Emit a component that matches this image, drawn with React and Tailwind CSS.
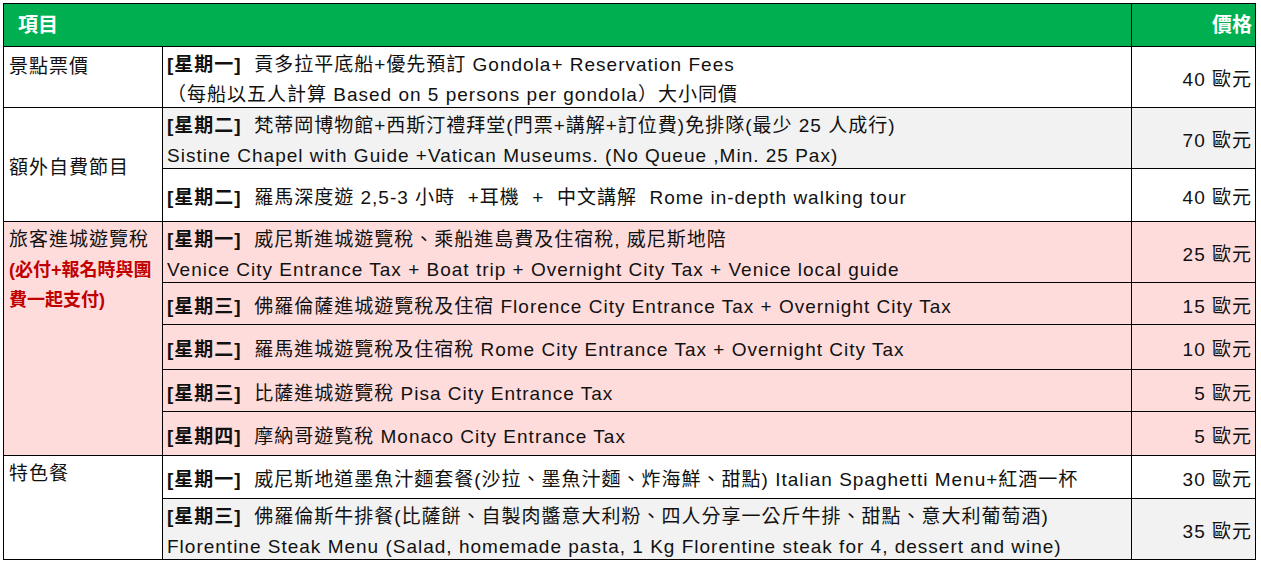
import React from "react";

const B = ({ children }) => <span className="font-bold">{children}</span>;

const cellL = "border border-black align-top pl-[5px] pt-[3px] leading-[30px]";
const cellM = "border border-black align-middle pl-[4px] leading-[30px] whitespace-pre-wrap";
const cellR = "border border-black align-middle text-right pr-[3px] leading-[30px]";

const Nudge = ({ children }) => <div className="pt-[3px] -mb-[3px]">{children}</div>;

function Row({ h, bg = "", text, price, children }) {
  return (
    <tr className={h + " " + bg}>
      {children}
      <td className={cellM}><Nudge>{text}</Nudge></td>
      <td className={cellR}><Nudge>{price}</Nudge></td>
    </tr>
  );
}

export default function App() {
  return (
    <div className="w-[1261px] h-[565px] bg-white pt-[3px] pl-[3px] text-[19px] text-[#111] tracking-[1px]" style={{ fontFamily: '"Liberation Sans", "Noto Sans CJK TC", sans-serif' }}>
      <table className="border-collapse table-fixed w-[1252px]">
        <colgroup>
          <col className="w-[159px]" />
          <col className="w-[969px]" />
          <col className="w-[124px]" />
        </colgroup>
        <tbody>
          <tr className="h-[43px] bg-[#00b050] text-white font-bold">
            <td className="border border-black border-r-0 pl-[14px] align-middle text-[20px] tracking-[0px]" colSpan={2}>項目</td>
            <td className="border border-black text-right pr-[3px] align-middle text-[20px] tracking-[0px]">價格</td>
          </tr>
          <Row
            h="h-[61px]"
            text={<><B>[星期一]</B>  貢多拉平底船+優先預訂 Gondola+ Reservation Fees<br />（每船以五人計算 Based on 5 persons per gondola）大小同價</>}
            price="40 歐元"
          >
            <td className={cellL + " pt-[5px]"}>景點票價</td>
          </Row>
          <Row
            h="h-[61px]"
            bg="bg-[#f2f2f2]"
            text={<><B>[星期二]</B>  梵蒂岡博物館+西斯汀禮拜堂(門票+講解+訂位費)免排隊(最少 25 人成行)<br />Sistine Chapel with Guide +Vatican Museums. (No Queue ,Min. 25 Pax)</>}
            price="70 歐元"
          >
            <td className="border border-black align-middle pl-[5px] leading-[30px] bg-white" rowSpan={2}><Nudge>額外自費節目</Nudge></td>
          </Row>
          <Row
            h="h-[53px]"
            text={<><B>[星期二]</B>  羅馬深度遊 2,5-3 小時  +耳機  +  中文講解  Rome in-depth walking tour</>}
            price="40 歐元"
          />
          <Row
            h="h-[59px]"
            bg="bg-[#ffdcdc]"
            text={<><B>[星期一]</B>  威尼斯進城遊覽稅、乘船進島費及住宿稅, 威尼斯地陪<br />Venice City Entrance Tax + Boat trip + Overnight City Tax + Venice local guide</>}
            price="25 歐元"
          >
            <td className={cellL} rowSpan={5}>
              旅客進城遊覽稅<br />
              <span className="font-bold text-[#c00000] text-[18px] tracking-[0px]">(必付+報名時與團<br />費一起支付)</span>
            </td>
          </Row>
          <Row
            h="h-[42px]"
            bg="bg-[#ffdcdc]"
            text={<><B>[星期三]</B>  佛羅倫薩進城遊覽稅及住宿 Florence City Entrance Tax + Overnight City Tax</>}
            price="15 歐元"
          />
          <Row
            h="h-[45px]"
            bg="bg-[#ffdcdc]"
            text={<><B>[星期二]</B>  羅馬進城遊覽稅及住宿稅 Rome City Entrance Tax + Overnight City Tax</>}
            price="10 歐元"
          />
          <Row
            h="h-[42px]"
            bg="bg-[#ffdcdc]"
            text={<><B>[星期三]</B>  比薩進城遊覽稅 Pisa City Entrance Tax</>}
            price="5 歐元"
          />
          <Row
            h="h-[44px]"
            bg="bg-[#ffdcdc]"
            text={<><B>[星期四]</B>  摩納哥遊覧稅 Monaco City Entrance Tax</>}
            price="5 歐元"
          />
          <Row
            h="h-[43px]"
            text={<><B>[星期一]</B>  威尼斯地道墨魚汁麵套餐(沙拉、墨魚汁麵、炸海鮮、甜點) Italian Spaghetti Menu+紅酒一杯</>}
            price="30 歐元"
          >
            <td className={cellL} rowSpan={2}>特色餐</td>
          </Row>
          <Row
            h="h-[61px]"
            bg="bg-[#f2f2f2]"
            text={<><B>[星期三]</B>  佛羅倫斯牛排餐(比薩餅、自製肉醬意大利粉、四人分享一公斤牛排、甜點、意大利葡萄酒)<br />Florentine Steak Menu (Salad, homemade pasta, 1 Kg Florentine steak for 4, dessert and wine)</>}
            price="35 歐元"
          />
        </tbody>
      </table>
    </div>
  );
}
